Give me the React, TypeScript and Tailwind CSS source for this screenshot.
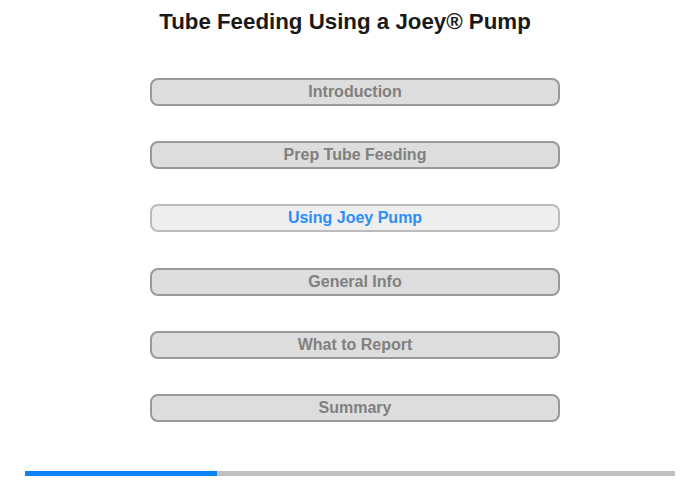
import React from "react";

const items = [
  "Introduction",
  "Prep Tube Feeding",
  "Using Joey Pump",
  "General Info",
  "What to Report",
  "Summary",
];

export default function App() {
  return (
    <div
      className="w-[700px] h-[480px] bg-white flex flex-col"
      style={{ fontFamily: '"Liberation Sans", Arial, sans-serif' }}
    >
      <h1 className="mt-[9px] h-[26px] pr-[10px] text-center text-[22.3px] leading-[26px] font-bold text-[#1a1a1a]">
        Tube Feeding Using a Joey® Pump
      </h1>
      <div className="mt-[43px] flex flex-col gap-[35.2px] pl-[150px]">
        {items.map((t, i) => {
          const active = i === 2;
          return (
            <div
              key={t}
              className={
                "w-[410px] h-[28px] rounded-[8px] border-2 flex items-center justify-center text-[16px] font-bold " +
                (active
                  ? "bg-[#eeeeee] border-[#bbbbbb] text-[#2b8ff5]"
                  : "bg-[#dddddd] border-[#999999] text-[#808080]")
              }
            >
              {t}
            </div>
          );
        })}
      </div>
      <div className="mt-[49px] mx-[25px] h-[5px] bg-[#c0c0c0] flex">
        <div className="w-[192px] h-full bg-[#0a84f5]" />
      </div>
    </div>
  );
}
